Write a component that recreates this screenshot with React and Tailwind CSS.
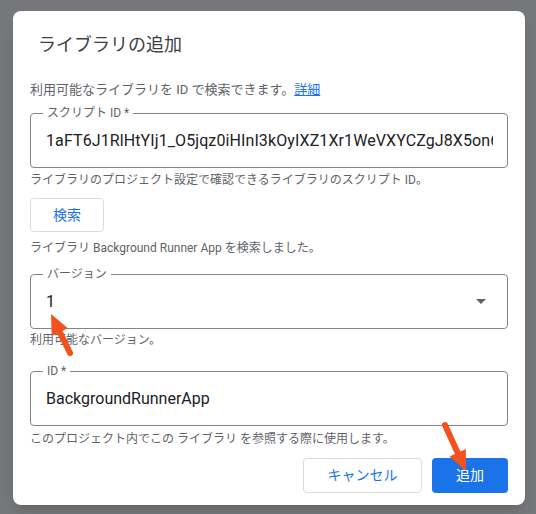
const jp = { fontFamily: 'Roboto, "Noto Sans CJK JP", sans-serif' };

// outlined field with the label sitting in the top border
function OutlinedField({ label, children, className = '' }) {
  return (
    <div className={`relative h-[55px] rounded-[4px] border border-[#80868b] flex items-center pl-[15px] pr-[14px] ${className}`}>
      <span className="absolute -top-[9px] left-[12px] bg-white px-[4px] text-[12px] leading-[16px] text-[#5f6368]">
        {label}
      </span>
      {children}
    </div>
  );
}

function Arrow({ className, x1, y1, x2, y2, w, h }) {
  // red pointer arrow laid over the form
  const ang = Math.atan2(y2 - y1, x2 - x1);
  const len = 22;
  const spread = 0.42;
  const a = [x2 - len * Math.cos(ang - spread), y2 - len * Math.sin(ang - spread)];
  const b = [x2 - len * Math.cos(ang + spread), y2 - len * Math.sin(ang + spread)];
  const sx = x2 - 14 * Math.cos(ang);
  const sy = y2 - 14 * Math.sin(ang);
  return (
    <svg className={`absolute pointer-events-none ${className}`} width={w} height={h} viewBox={`0 0 ${w} ${h}`}>
      <line x1={x1} y1={y1} x2={sx} y2={sy} stroke="#f4511e" strokeWidth="6" strokeLinecap="round" />
      <polygon points={`${x2},${y2} ${a[0]},${a[1]} ${b[0]},${b[1]}`} fill="#f4511e" />
    </svg>
  );
}

export default function App() {
  return (
    <div className="relative min-h-[514px] w-[536px] bg-[#76777a] pt-[11px] pl-[13px]" style={jp}>
      <div className="w-[512px] h-[494px] rounded-[8px] bg-white shadow-lg px-[17px] pt-[22px]">
        <h2 className="pl-[8px] text-[18px] leading-[24px] text-[#3c4043] font-normal">ライブラリの追加</h2>

        <p className="mt-[23px] text-[13px] leading-[20px] text-[#5f6368]">
          利用可能なライブラリを ID で検索できます。
          <a className="text-[#1a73e8] underline">詳細</a>
        </p>

        <OutlinedField label="スクリプト ID *" className="mt-[13px]">
          <span className="block overflow-hidden whitespace-nowrap text-[16px] tracking-[0.1px] text-[#202124]">
            1aFT6J1RlHtYIj1_O5jqz0iHInI3kOyIXZ1Xr1WeVXYCZgJ8X5on6
          </span>
        </OutlinedField>
        <p className="mt-[4px] text-[12px] leading-[16px] text-[#5f6368]">
          ライブラリのプロジェクト設定で確認できるライブラリのスクリプト ID。
        </p>

        <button className="mt-[10px] h-[34px] w-[74px] rounded-[4px] border border-[#dadce0] bg-white text-[14px] text-[#1a73e8]">
          検索
        </button>
        <p className="mt-[8px] text-[12px] leading-[16px] text-[#5f6368]">
          ライブラリ Background Runner App を検索しました。
        </p>

        <OutlinedField label="バージョン" className="mt-[18px] justify-between">
          <span className="text-[16px] text-[#202124]">1</span>
          <span className="mr-[7px] h-0 w-0 border-x-[5px] border-t-[5px] border-x-transparent border-t-[#5f6368]" />
        </OutlinedField>
        <p className="mt-[3px] text-[12px] leading-[16px] text-[#5f6368]">利用可能なバージョン。</p>

        <OutlinedField label="ID *" className="mt-[23px]">
          <span className="text-[16px] text-[#202124]">BackgroundRunnerApp</span>
        </OutlinedField>
        <p className="mt-[5px] text-[12px] leading-[16px] text-[#5f6368]">
          このプロジェクト内でこの ライブラリ を参照する際に使用します。
        </p>

        <div className="mt-[11px] flex justify-end gap-[10px]">
          <button className="h-[35px] w-[119px] rounded-[4px] border border-[#dadce0] bg-white text-[14px] text-[#1a73e8]">
            キャンセル
          </button>
          <button className="h-[35px] w-[76px] rounded-[4px] bg-[#1a73e8] text-[14px] text-white">追加</button>
        </div>
      </div>

      <Arrow className="left-[40px] top-[305px]" w={44} h={60} x1={30} y1={48} x2={11} y2={9} />
      <Arrow className="left-[435px] top-[415px]" w={44} h={70} x1={10} y1={10} x2={31} y2={56} />
    </div>
  );
}
